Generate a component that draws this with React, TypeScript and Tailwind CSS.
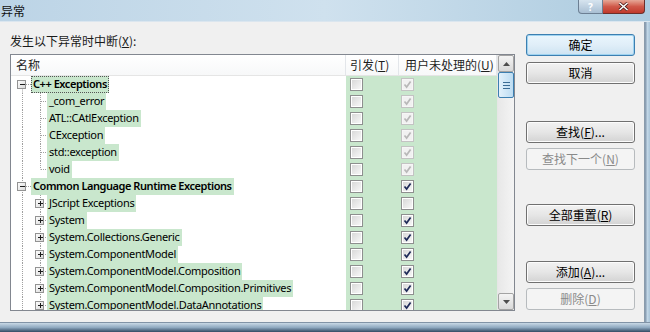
import React from "react";

type Row = {
  label: string;
  level: 0 | 1;
  bold?: boolean;
  box?: "minus" | "plus" | null;
  c2: "grey" | "on" | "off";
  last?: boolean;
  first?: boolean;
  focus?: boolean;
};

const rows: Row[] = [
  { label: "C++ Exceptions", level: 0, bold: true, box: "minus", c2: "grey", first: true, focus: true },
  { label: "_com_error", level: 1, c2: "grey" },
  { label: "ATL::CAtlException", level: 1, c2: "grey" },
  { label: "CException", level: 1, c2: "grey" },
  { label: "std::exception", level: 1, c2: "grey" },
  { label: "void", level: 1, c2: "grey", last: true },
  { label: "Common Language Runtime Exceptions", level: 0, bold: true, box: "minus", c2: "on" },
  { label: "JScript Exceptions", level: 1, box: "plus", c2: "off" },
  { label: "System", level: 1, box: "plus", c2: "on" },
  { label: "System.Collections.Generic", level: 1, box: "plus", c2: "on" },
  { label: "System.ComponentModel", level: 1, box: "plus", c2: "on" },
  { label: "System.ComponentModel.Composition", level: 1, box: "plus", c2: "on" },
  { label: "System.ComponentModel.Composition.Primitives", level: 1, box: "plus", c2: "on" },
  { label: "System.ComponentModel.DataAnnotations", level: 1, box: "plus", c2: "on" },
];

const latin = { fontFamily: '"Noto Sans", "Noto Sans CJK SC", sans-serif' };
const cjk = { fontFamily: '"Noto Sans CJK SC", "Noto Sans", sans-serif' };

function ExpBox({ cx, kind }: { cx: number; kind: "minus" | "plus" }) {
  return (
    <g>
      <rect x={cx - 4.5} y={4.5} width={8} height={8} fill="url(#boxg)" stroke="#939393" />
      <line x1={cx - 2} y1={8.5} x2={cx + 3} y2={8.5} stroke="#1d1d1d" />
      {kind === "plus" && <line x1={cx + 0.5} y1={6} x2={cx + 0.5} y2={11} stroke="#1d1d1d" />}
    </g>
  );
}

function Gutter({ row }: { row: Row }) {
  const dash = "1 1";
  const col = "#a0a0a0";
  if (row.level === 0) {
    return (
      <svg width={20} height={17} className="shrink-0">
        <defs>
          <linearGradient id="boxg" x1="0" y1="0" x2="1" y2="1">
            <stop offset="0" stopColor="#ffffff" />
            <stop offset="1" stopColor="#d8d8d8" />
          </linearGradient>
        </defs>
        <line x1={11.5} y1={row.first ? 8.5 : 0} x2={11.5} y2={17} stroke={col} strokeDasharray={dash} />
        <line x1={15} y1={8.5} x2={20} y2={8.5} stroke={col} strokeDasharray={dash} />
        <ExpBox cx={11} kind="minus" />
      </svg>
    );
  }
  return (
    <svg width={36} height={17} className="shrink-0">
      <defs>
        <linearGradient id="boxg" x1="0" y1="0" x2="1" y2="1">
          <stop offset="0" stopColor="#ffffff" />
          <stop offset="1" stopColor="#d8d8d8" />
        </linearGradient>
      </defs>
      <line x1={11.5} y1={0} x2={11.5} y2={17} stroke={col} strokeDasharray={dash} />
      <line x1={29.5} y1={0} x2={29.5} y2={row.last ? 8.5 : 17} stroke={col} strokeDasharray={dash} />
      <line x1={30} y1={8.5} x2={36} y2={8.5} stroke={col} strokeDasharray={dash} />
      {row.box && <ExpBox cx={29} kind={row.box} />}
    </svg>
  );
}

function Check({ state }: { state: "grey" | "on" | "off" }) {
  const grey = state === "grey";
  return (
    <div
      className={
        "w-[13px] h-[13px] border p-[1px] " +
        (grey ? "border-[#c3c3c3] bg-[#f6f6f6]" : "border-[#8e8f8f] bg-white")
      }
    >
      <div
        className={
          "w-full h-full " +
          (grey ? "bg-[#f1f1f1]" : "bg-gradient-to-br from-[#d9d9d9] to-[#f7f7f7]")
        }
      >
        {state !== "off" && (
          <svg width={9} height={9} viewBox="0 0 9 9">
            <path
              d="M1.5 4.5 L3.6 7 L7.6 1.5"
              fill="none"
              stroke={grey ? "#b8b8b8" : "#1e2b58"}
              strokeWidth={1.7}
            />
          </svg>
        )}
      </div>
    </div>
  );
}

function Btn({
  children,
  def,
  disabled,
  className = "",
}: {
  children: React.ReactNode;
  def?: boolean;
  disabled?: boolean;
  className?: string;
}) {
  return (
    <div
      style={cjk}
      className={
        "h-[22px] w-[109px] rounded-[3px] border flex items-center justify-center text-[12px] leading-none " +
        (disabled
          ? "border-[#b7bbbe] bg-[#f4f4f4] text-[#8a8a8a] "
          : def
          ? "border-[#3c7fb1] bg-gradient-to-b from-[#eaf6fd] via-[#e0eef8] to-[#cde3f2] text-black shadow-[inset_0_0_0_1px_#9fd3f0] "
          : "border-[#707070] bg-gradient-to-b from-[#f2f2f2] via-[#e6e6e6] to-[#d3d3d3] text-black shadow-[inset_0_0_0_1px_#fcfcfc] ") +
        className
      }
    >
      {children}
    </div>
  );
}

export default function App() {
  return (
    <div className="w-[650px] h-[332px] flex flex-col overflow-hidden bg-[#f0f0f0]">
      {/* title bar */}
      <div className="h-[22px] flex items-start bg-gradient-to-r from-[#bcd4e6] via-[#cfe1ee] to-[#accbdf] border-b border-[#dbe6ef]">
        <div style={cjk} className="text-[12px] leading-none pt-[5px] pl-[1px] text-[#111]">
          异常
        </div>
        <div className="ml-auto mr-[5px] flex h-[14px]">
          <div className="w-[25px] h-full rounded-bl-[4px] border border-t-0 border-[#6c7f93] bg-gradient-to-b from-[#d6e4ef] to-[#a9bfd3] flex items-center justify-center text-[10px] font-bold text-white leading-none" style={latin}>
            ?
          </div>
          <div className="w-[42px] h-full rounded-br-[4px] border border-l-0 border-t-0 border-[#6c2f2a] bg-gradient-to-b from-[#e5a797] via-[#d0594a] to-[#c0392b] flex items-center justify-center">
            <svg width={11} height={9} viewBox="0 0 11 9">
              <path d="M1.5 1 L9.5 8 M9.5 1 L1.5 8" stroke="#4b1e1a" strokeWidth={3} />
              <path d="M1.5 1 L9.5 8 M9.5 1 L1.5 8" stroke="#ffffff" strokeWidth={1.6} />
            </svg>
          </div>
        </div>
      </div>

      {/* middle */}
      <div className="flex-1 flex min-h-0">
        <div className="flex-1 flex bg-[#f0f0f0]">
          {/* left column */}
          <div className="pl-[10px] pt-[11px] flex flex-col">
            <div style={cjk} className="text-[12px] leading-[16px] h-[16px] text-[#1a1a1a]">
              发生以下异常时中断(<span className="underline">X</span>):
            </div>
            <div className="mt-[5px] w-[505px] h-[257px] border border-[#828790] bg-white flex">
              <div className="flex-1 flex flex-col min-w-0">
                {/* header */}
                <div style={cjk} className="h-[21px] flex text-[12px] text-[#1e1e1e] border-b border-[#e5e5e5] bg-gradient-to-b from-white to-[#f7f8f9]">
                  <div className="w-[335px] flex items-center pl-[5px] border-r border-[#e3e6ea]">名称</div>
                  <div className="w-[53px] flex items-center pl-[4px] border-r border-[#e3e6ea]">
                    引发(<span className="underline">T</span>)
                  </div>
                  <div className="flex-1 flex items-center pl-[6px] border-r border-[#e3e6ea]">
                    用户未处理的(<span className="underline">U</span>)
                  </div>
                </div>
                {/* rows */}
                <div className="flex-1 overflow-hidden flex flex-col">
                  {rows.map((r, i) => (
                    <div key={i} className="h-[17px] shrink-0 flex">
                      <div className="w-[335px] flex items-stretch">
                        <Gutter row={r} />
                        <span
                          style={latin}
                          className={
                            "h-[17px] px-[2px] bg-[#c9e7cd] text-[11px] leading-[16px] whitespace-nowrap text-black " +
                            (r.bold ? "font-semibold tracking-[-0.45px] " : "tracking-[-0.3px] ") +
                            (r.focus ? "outline outline-1 outline-dotted outline-[#555] -outline-offset-1" : "")
                          }
                        >
                          {r.label}
                        </span>
                      </div>
                      <div className="flex-1 flex bg-[#c9e7cd]">
                        <div className="w-[53px] flex items-center pl-[4px]">
                          <Check state="off" />
                        </div>
                        <div className="flex-1 flex items-center pl-[2px]">
                          <Check state={r.c2} />
                        </div>
                      </div>
                    </div>
                  ))}
                </div>
              </div>
              {/* scrollbar */}
              <div className="w-[17px] flex flex-col bg-gradient-to-r from-[#e8e8e8] to-[#f4f4f4] border-l border-[#e6e6e6]">
                <div className="h-[17px] rounded-[2px] border border-[#a3a3a3] bg-gradient-to-b from-[#f4f4f4] to-[#d9d9d9] flex items-center justify-center">
                  <svg width={7} height={4} viewBox="0 0 7 4">
                    <path d="M0 4 L3.5 0 L7 4 Z" fill="#4d4d4d" />
                  </svg>
                </div>
                <div className="h-[26px] rounded-[2px] border border-[#3c7fb1] bg-gradient-to-r from-[#e3f1fb] to-[#bcdcf2] flex flex-col items-center justify-center gap-[2px]">
                  <div className="w-[7px] h-[1px] bg-[#3c6d94]" />
                  <div className="w-[7px] h-[1px] bg-[#3c6d94]" />
                  <div className="w-[7px] h-[1px] bg-[#3c6d94]" />
                </div>
                <div className="flex-1" />
                <div className="h-[17px] rounded-[2px] border border-[#a3a3a3] bg-gradient-to-b from-[#f4f4f4] to-[#d9d9d9] flex items-center justify-center">
                  <svg width={7} height={4} viewBox="0 0 7 4">
                    <path d="M0 0 L3.5 4 L7 0 Z" fill="#4d4d4d" />
                  </svg>
                </div>
              </div>
            </div>
          </div>

          {/* right buttons */}
          <div className="ml-[11px] pt-[12px] flex flex-col">
            <Btn def>确定</Btn>
            <Btn className="mt-[6px]">取消</Btn>
            <Btn className="mt-[37px]">
              查找(<span className="underline">F</span>)...
            </Btn>
            <Btn disabled className="mt-[5px]">
              查找下一个(<span className="underline">N</span>)
            </Btn>
            <Btn className="mt-[34px]">
              全部重置(<span className="underline">R</span>)
            </Btn>
            <Btn className="mt-[35px]">
              添加(<span className="underline">A</span>)...
            </Btn>
            <Btn disabled className="mt-[5px]">
              删除(<span className="underline">D</span>)
            </Btn>
          </div>
        </div>
        {/* right frame */}
        <div className="w-[6px] bg-gradient-to-r from-[#7f93a8] via-[#c1d6e6] to-[#a9c4d8] border-l border-[#8a9bab]" />
      </div>

      {/* bottom frame */}
      <div className="h-[10px] bg-gradient-to-b from-[#c9d9e6] via-[#8fa9c0] to-[#334a63] border-t border-[#8193a6]" />
    </div>
  );
}
